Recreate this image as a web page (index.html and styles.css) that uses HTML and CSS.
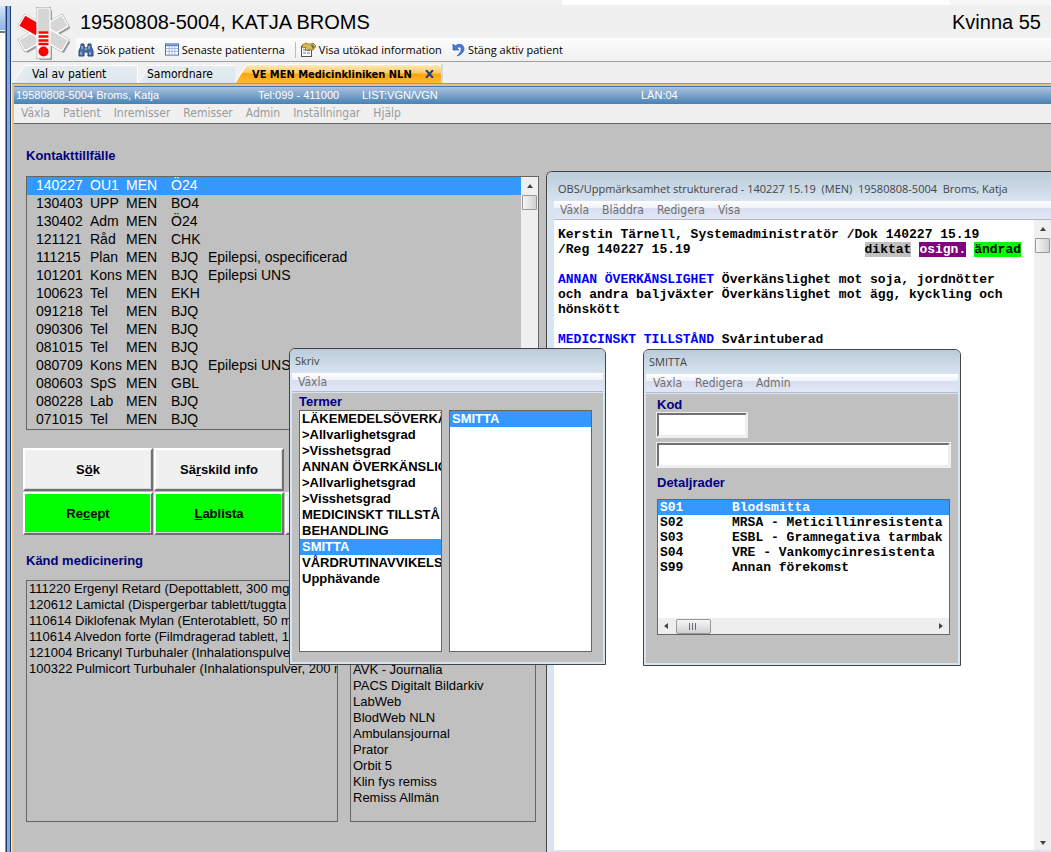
FILE: index.html
```html
<!DOCTYPE html>
<html lang="sv">
<head>
<meta charset="utf-8">
<title>Patientjournal</title>
<link rel="stylesheet" href="styles.css">
</head>
<body>
<div class="app">
  <aside class="edge">
    <div class="edge-pane"><div class="edge-head"></div></div>
    <div class="edge-bar"></div>
  </aside>
  <div class="main">
    <div class="topstrip"><span class="topstrip-light"></span><span class="topstrip-end"></span></div>
    <header class="header">
      <svg class="logo" viewBox="-4 0 64 56" aria-hidden="true">
        <g transform="translate(2 2)" fill="#666" opacity=".6">
          <rect x="21" y="3" width="13" height="50" rx="1"/>
          <rect x="21" y="3" width="13" height="50" rx="1" transform="rotate(60 27.5 28)"/>
          <rect x="21" y="3" width="13" height="50" rx="1" transform="rotate(-60 27.5 28)"/>
        </g>
        <g fill="#999">
          <rect x="20" y="2" width="15" height="52" rx="1" transform="rotate(60 27.5 28)"/>
          <rect x="20" y="2" width="15" height="52" rx="1" transform="rotate(-60 27.5 28)"/>
          <rect x="20" y="2" width="15" height="52" rx="1"/>
        </g>
        <g fill="#d6d6d6" stroke="#fff" stroke-width="1.2">
          <rect x="21" y="3" width="13" height="50" rx="1" transform="rotate(60 27.5 28)"/>
          <rect x="21" y="3" width="13" height="50" rx="1" transform="rotate(-60 27.5 28)"/>
          <rect x="21" y="3" width="13" height="20" rx="1" fill="#f00" transform="rotate(-60 27.5 28)"/>
          <rect x="21" y="3" width="13" height="50" rx="1"/>
        </g>
        <path d="M22 26h11v26H22z" fill="#fff"/>
        <path d="M22.500 27.500h10M22.500 31.500h10M22.500 35.500h10M22.500 39h10" stroke="#f00" stroke-width="2.300"/>
        <circle cx="27.500" cy="46.500" r="5" fill="#f00"/>
      </svg>
      <div class="header-body">
        <div class="patient"><h1>19580808-5004, KATJA BROMS</h1><span>Kvinna 55</span></div>
        <nav class="toolbar">
          <button type="button">
            <svg width="16" height="14" viewBox="0 0 16 14"><path d="M3 1h3v2l1 2h2l1-2V1h3v2l2 5v5h-5V9H6v4H1V8l2-5z" fill="#4a6da7" stroke="#24447c"/><path d="M3 9v3M12 9v3M4 3v3M11 3v3" stroke="#c5d8f2"/><path d="M7 6h2" stroke="#c5d8f2"/></svg>Sök patient</button>
          <button type="button">
            <svg width="14" height="13" viewBox="0 0 15 13"><rect x=".5" y=".5" width="14" height="12" fill="#fff" stroke="#4668ae"/><path d="M1 2h13" stroke="#5e86cf" stroke-width="2"/><path d="M1 5.500h13M1 8.500h13M4.500 3v9M7.500 3v9M10.500 3v9" stroke="#9db3d9"/></svg>Senaste patienterna</button>
          <i class="sep"></i>
          <button type="button">
            <svg width="16" height="15" viewBox="0 0 16 15"><rect x="1.500" y="4.500" width="10" height="10" fill="#fff" stroke="#555"/><path d="M3 8h3M3 11h3M7 11h3M7 8.500h3" stroke="#4a74c0"/><path d="M2 3l4-2 2 1h3l2-1 3 3-3 4-2 0-2-1-2 2-2-1 1-3-3 1z" fill="#e2b752" stroke="#8b671c" stroke-width=".8"/><path d="M12 2l3 3-2 2-2-3z" fill="#557d6a"/></svg>Visa utökad information</button>
          <button type="button">
            <svg width="13" height="14" viewBox="0 0 13 14"><path d="M1 1v6h6L5 5c2-2 5-1 4 2 0 2-2 4-4 6 4-1 7-4 7-7C12 1 7 0 3 3z" fill="#4b7ad8" stroke="#2d57b0" stroke-width=".7"/></svg>Stäng aktiv patient</button>
        </nav>
      </div>
    </header>
    <div class="tabs" role="tablist">
      <button type="button" role="tab" class="tab tab-first"><svg viewBox="0 0 14 18" preserveAspectRatio="none"><path d="M0 18L10 3Q12 0 14 0V18z" fill="#e4ebef"/><path d="M0 18L10 3Q12 .5 14 .5" fill="none" stroke="#fff"/></svg><span>Val av patient</span></button>
      <button type="button" role="tab" class="tab tab-second"><svg viewBox="0 0 14 18" preserveAspectRatio="none"><path d="M0 18L10 3Q12 0 14 0V18z" fill="#e4ebef"/><path d="M0 18L10 3Q12 .5 14 .5" fill="none" stroke="#fff"/></svg><span>Samordnare</span></button>
      <button type="button" role="tab" class="tab tab-active" aria-selected="true"><svg viewBox="0 0 14 18" preserveAspectRatio="none"><defs><linearGradient id="g" x2="0" y2="1"><stop offset="0" stop-color="#ffe9bd"/><stop offset=".45" stop-color="#ffc860"/><stop offset=".5" stop-color="#ffa50a"/><stop offset="1" stop-color="#ffb93c"/></linearGradient></defs><path d="M0 18L10 3Q12 0 14 0V18z" fill="url(#g)"/><path d="M0 18L10 3Q12 .5 14 .5" fill="none" stroke="#fff"/></svg><span>VE MEN Medicinkliniken NLN</span>
        <svg class="x" viewBox="0 0 9 8"><path d="M1 0l7 8M8 0L1 8" stroke="#1f3f7d" stroke-width="2"/></svg></button>
    </div>
    <div class="frame">
      <div class="patientbar"><span class="pb-name">19580808-5004 Broms, Katja</span><span class="pb-tel">Tel:099 - 411000</span><span class="pb-list">LIST:VGN/VGN</span><span>LÄN:04</span></div>
      <nav class="menu menu-main"><button type="button">Växla</button><button type="button">Patient</button><button type="button">Inremisser</button><button type="button">Remisser</button><button type="button">Admin</button><button type="button">Inställningar</button><button type="button">Hjälp</button></nav>
      <main class="desk">
        <section class="left">
          <h2>Kontakttillfälle</h2>
          <div class="box contacts">
            <table>
              <colgroup><col class="c1"><col class="c2"><col class="c3"><col class="c4"><col></colgroup>
              <tbody>
              <tr class="sel"><td>140227</td><td>OU1</td><td>MEN</td><td>Ö24</td><td></td></tr>
              <tr><td>130403</td><td>UPP</td><td>MEN</td><td>BO4</td><td></td></tr>
              <tr><td>130402</td><td>Adm</td><td>MEN</td><td>Ö24</td><td></td></tr>
              <tr><td>121121</td><td>Råd</td><td>MEN</td><td>CHK</td><td></td></tr>
              <tr><td>111215</td><td>Plan</td><td>MEN</td><td>BJQ</td><td>Epilepsi, ospecificerad</td></tr>
              <tr><td>101201</td><td>Kons</td><td>MEN</td><td>BJQ</td><td>Epilepsi UNS</td></tr>
              <tr><td>100623</td><td>Tel</td><td>MEN</td><td>EKH</td><td></td></tr>
              <tr><td>091218</td><td>Tel</td><td>MEN</td><td>BJQ</td><td></td></tr>
              <tr><td>090306</td><td>Tel</td><td>MEN</td><td>BJQ</td><td></td></tr>
              <tr><td>081015</td><td>Tel</td><td>MEN</td><td>BJQ</td><td></td></tr>
              <tr><td>080709</td><td>Kons</td><td>MEN</td><td>BJQ</td><td>Epilepsi UNS</td></tr>
              <tr><td>080603</td><td>SpS</td><td>MEN</td><td>GBL</td><td></td></tr>
              <tr><td>080228</td><td>Lab</td><td>MEN</td><td>BJQ</td><td></td></tr>
              <tr><td>071015</td><td>Tel</td><td>MEN</td><td>BJQ</td><td></td></tr>
              </tbody>
            </table>
            <div class="vscroll"><i class="up"></i><i class="thumb"></i></div>
          </div>
          <div class="buttons">
            <button type="button">S<u>ö</u>k</button>
            <button type="button">Sä<u>r</u>skild info</button>
            <span></span>
            <button type="button" class="green">Re<u>c</u>ept</button>
            <button type="button" class="green"><u>L</u>ablista</button>
            <button type="button" aria-label="Mer"></button>
          </div>
          <h2 class="h-med">Känd medicinering</h2>
          <div class="lists">
            <ul class="box meds">
              <li>111220 Ergenyl Retard (Depottablett, 300 mg</li>
              <li>120612 Lamictal (Dispergerbar tablett/tuggta</li>
              <li>110614 Diklofenak Mylan (Enterotablett, 50 m</li>
              <li>110614 Alvedon forte (Filmdragerad tablett, 1</li>
              <li>121004 Bricanyl Turbuhaler (Inhalationspulve</li>
              <li>100322 Pulmicort Turbuhaler (Inhalationspulver, 200 m</li>
            </ul>
            <ul class="box links">
              <li>AVK - Journalia</li><li>PACS Digitalt Bildarkiv</li><li>LabWeb</li><li>BlodWeb NLN</li><li>Ambulansjournal</li><li>Prator</li><li>Orbit 5</li><li>Klin fys remiss</li><li>Remiss Allmän</li>
            </ul>
          </div>
        </section>

        <section class="window obs">
          <div class="title">OBS/Uppmärksamhet strukturerad - 140227 15.19&nbsp; (MEN)&nbsp; 19580808-5004&nbsp; Broms, Katja</div>
          <nav class="menu menu-win"><button type="button">Växla</button><button type="button">Bläddra</button><button type="button">Redigera</button><button type="button">Visa</button></nav>
          <div class="obs-body">
            <article class="note">
              <p>Kerstin Tärnell, Systemadministratör /Dok 140227 15.19</p>
              <p class="reg"><span>/Reg 140227 15.19</span><span class="tags"><mark class="t-grey">diktat</mark><mark class="t-purple">osign.</mark><mark class="t-green">ändrad</mark></span></p>
              <p class="gap"><b>ANNAN ÖVERKÄNSLIGHET</b> Överkänslighet mot soja, jordnötter<br>och andra baljväxter Överkänslighet mot ägg, kyckling och<br>hönskött</p>
              <p class="gap"><b>MEDICINSKT TILLSTÅND</b> Svårintuberad</p>
            </article>
            <div class="vscroll"><i class="up"></i><i class="thumb"></i><i class="down"></i></div>
          </div>
        </section>

        <section class="window skriv">
          <div class="title">Skriv</div>
          <nav class="menu menu-win"><button type="button">Växla</button></nav>
          <div class="skriv-body">
            <h2>Termer</h2>
            <div class="terms">
              <ul class="box"><li>LÄKEMEDELSÖVERKÄ</li><li>&gt;Allvarlighetsgrad</li><li>&gt;Visshetsgrad</li><li>ANNAN ÖVERKÄNSLIG</li><li>&gt;Allvarlighetsgrad</li><li>&gt;Visshetsgrad</li><li>MEDICINSKT TILLSTÅ</li><li>BEHANDLING</li><li class="sel">SMITTA</li><li>VÅRDRUTINAVVIKELS</li><li>Upphävande</li></ul>
              <ul class="box"><li class="sel">SMITTA</li></ul>
            </div>
          </div>
        </section>

        <section class="window smitta">
          <div class="title">SMITTA</div>
          <nav class="menu menu-win"><button type="button">Växla</button><button type="button">Redigera</button><button type="button">Admin</button></nav>
          <div class="smitta-body">
            <label for="kod">Kod</label>
            <input id="kod" class="kod" type="text">
            <input class="text" type="text" aria-label="Text">
            <h2>Detaljrader</h2>
            <div class="box details">
              <table>
                <colgroup><col class="d1"><col></colgroup>
                <tbody>
                <tr class="sel"><td>S01</td><td>Blodsmitta</td></tr>
                <tr><td>S02</td><td>MRSA - Meticillinresistenta</td></tr>
                <tr><td>S03</td><td>ESBL - Gramnegativa tarmbak</td></tr>
                <tr><td>S04</td><td>VRE - Vankomycinresistenta</td></tr>
                <tr><td>S99</td><td>Annan förekomst</td></tr>
                </tbody>
              </table>
              <div class="hscroll"><i class="lt"></i><i class="hthumb"></i><i class="rt"></i></div>
            </div>
          </div>
        </section>
      </main>
    </div>
  </div>
</div>
</body>
</html>
```
FILE: styles.css
```css
* { box-sizing: border-box; }
body { margin: 0; font: 14px/16px "Liberation Sans", Arial, sans-serif; color: #000; background: #f0f0f0; }
button { font: inherit; color: inherit; border: 0; background: none; padding: 0; white-space: nowrap; }
ul { list-style: none; margin: 0; padding: 0; }
h1, h2, p { margin: 0; }
table { border-collapse: collapse; table-layout: fixed; width: 100%; }
td { padding: 0; white-space: nowrap; overflow: hidden; }

.app { display: flex; height: 100vh; overflow: hidden; }
.edge { display: flex; flex: none; width: 12px; padding-top: 6px; }
.edge-pane { flex: 1; background: #fff; }
.edge-head { height: 27px; background: linear-gradient(#d3e3f8, #8fb4e6 88%, #fff 88%, #fff 94%, #777 94%); }
.edge-bar { width: 7px; border-left: 1px solid #8c8c8c; border-right: 1px solid #f0f0f0;
  background: linear-gradient(90deg, #1c3a70 1px, #87a9e0 1px, #87a9e0 4px, #1c3a70 4px); }
.main { flex: 1; min-width: 0; display: flex; flex-direction: column; }

.topstrip { display: flex; height: 5px; background: #f2f2f2; padding-left: 550px; }
.topstrip-light { flex: 1; background: #fff; }
.topstrip-end { width: 101px; background: #f6f6f6; }

.header { display: flex; height: 57px; border-bottom: 1px solid #a0a0a0; }
.logo { flex: none; width: 64px; height: 56px; }
.header-body { flex: 1; display: flex; flex-direction: column; }
.patient { flex: 1; display: flex; justify-content: space-between; align-items: center; padding: 0 10px 0 4px; font-size: 20px; line-height: 24px; }
.patient h1 { font-size: 20px; font-weight: 400; }
.toolbar { display: flex; align-items: center; height: 23px; gap: 10px; padding-left: 2px; font: 11px/16px "Open Sans", sans-serif; background: linear-gradient(#fdfdfd, #f0f0f0); }
.toolbar button { display: flex; align-items: center; gap: 3px; }
.sep { width: 1px; height: 16px; background: #bbb; }
.sep + button { margin-left: -6px; }

.tabs { display: flex; align-items: flex-end; height: 22px; border-bottom: 1px solid #7c9cc0; font: 12px/16px "DejaVu Sans Condensed", Tahoma, sans-serif; }
.tab { display: flex; align-items: center; height: 18px; }
.tab > svg:first-child { width: 14px; height: 18px; flex: none; }
.tab span { flex: 1; text-align: left; height: 18px; line-height: 17px; padding-left: 5px; background: linear-gradient(#e4ebef, #dde8ec); border-top: 1px solid #fff; }
.tab-first { width: 126px; padding-left: 1px; border-right: 1px solid #fff; }
.tab-second { width: 97px; }
.tab-second span { padding-left: 0; margin-left: -5px; }
.tab-active { width: 208px; height: 19px; font-weight: 700; position: relative; border-right: 2px solid #c9dcee; }
.tab-active > svg:first-child { height: 19px; }
.tab-active span { height: 19px; line-height: 19px; font-size: 11px; padding-left: 3px; background: linear-gradient(#ffe9bd, #ffc860 45%, #ffa50a 50%, #ffb93c); }
.x { position: absolute; right: 7px; top: 6px; width: 9px; height: 8px; }

.frame { flex: 1; min-height: 0; display: flex; flex-direction: column; border: solid #e8c27c; border-width: 2px 0 0 2px; }
.patientbar { display: flex; flex: none; height: 18px; padding-left: 2px; border-top: 1px solid #3f79ad; color: #fff; font-size: 11px; line-height: 17px; background: linear-gradient(#adc1de, #4682b4); white-space: nowrap; }
.pb-name { width: 242px; }
.pb-tel { width: 104px; }
.pb-list { width: 279px; }
.menu { display: flex; flex: none; align-items: center; gap: 13px; font: 12px/16px "DejaVu Sans Condensed", Tahoma, sans-serif; }
.menu-main { height: 20px; padding: 0 0 1px 7px; color: #9a9a9a; border-bottom: 1px solid #666; }
.desk { flex: 1; min-height: 0; position: relative; background: #c0c0c0; overflow: hidden; }

h2, label { font-size: 13px; line-height: 16px; font-weight: 700; color: #000080; }
.box { border: 1px solid #666; overflow: hidden; }
.box li { height: 16px; line-height: 16px; padding-left: 2px; white-space: nowrap; }
.sel { background: #3399ff; color: #fff; }
.left { display: flex; flex-direction: column; width: 525px; padding: 24px 0 0 12px; }
.contacts { display: flex; margin-top: 12px; }
.contacts table { flex: 1; }
.contacts td { height: 18px; line-height: 16px; vertical-align: top; }
.contacts td:first-child { padding-left: 9px; }
.c1 { width: 63px; } .c2 { width: 36px; } .c3 { width: 45px; } .c4 { width: 37px; }
.vscroll { display: flex; flex-direction: column; align-items: center; width: 17px; flex: none; background: #efefef; }
.up, .down { border: 3px solid transparent; width: 0; height: 0; }
.up { border-bottom: 4px solid #444; border-top: 0; margin: 7px 0; }
.down { border-top: 4px solid #444; border-bottom: 0; margin: auto 0 5px; }
.thumb { width: 15px; height: 15px; border: 1px solid #999; border-radius: 1px; background: linear-gradient(90deg, #f6f6f6, #d0d0d4); }

.buttons { display: grid; grid-template-columns: repeat(3, 130px); grid-auto-rows: 43px; gap: 1px; margin: 18px 0 0 -3px; }
.buttons button { font-weight: 700; font-size: 13px; background: #f0f0f0; border: 2px solid; border-color: #fff #707070 #707070 #fff; box-shadow: inset -1px -1px #d8d8d8; }
.buttons .green { background: #00ff00; }
.h-med { margin-top: 18px; }
.lists { display: flex; gap: 12px; margin-top: 11px; height: 242px; font-size: 13px; }
.meds { width: 312px; }
.links { width: 186px; display: flex; flex-direction: column; justify-content: flex-end; padding-bottom: 15px; }

.window { position: absolute; display: flex; flex-direction: column; border: 1px solid #444; border-radius: 6px 6px 0 0; background: #d7e4f2; overflow: hidden; }
.title { flex: none; height: 24px; padding-left: 5px; font: 11px/24px "Open Sans", sans-serif; color: #444; white-space: nowrap; background: linear-gradient(#bccbda, #d7e4f0); }
.menu-win { height: 19px; margin: 0 2px; padding-left: 6px; color: #707070; border-bottom: 1px solid #b4b9d0; background: linear-gradient(#fff, #f0f2fa 38%, #d8def0 38%, #e2e7f5); }
.obs { left: 532px; right: 0; top: 47px; bottom: 0; border-bottom: 0; border-right: 0; border-top-right-radius: 0; }
.obs .title { height: 29px; padding: 4px 0 0 11px; line-height: 26px; }
.obs .menu-win { margin: 0 0 0 7px; }
.obs-body { flex: 1; display: flex; margin: 0 0 2px 7px; background: #fff; }
.note { flex: 1; padding: 7px 13px 0 4px; font: 700 13px/15px "Liberation Mono", monospace; white-space: nowrap; }
.reg { display: flex; justify-content: space-between; }
.tags { display: flex; gap: 8px; }
.gap { margin-top: 15px; }
.note b { color: #0000ff; }
mark { color: #000; }
.t-grey { background: #c0c0c0; }
.t-purple { background: #800080; color: #fff; }
.t-green { background: #00ff00; }

.skriv { left: 275px; top: 224px; width: 317px; height: 317px; }
.smitta .menu-win { padding-left: 7px; }
.skriv-body { flex: 1; display: flex; flex-direction: column; margin: 1px 2px 2px; padding: 1px 11px 10px 7px; background: #c0c0c0; }
.terms { flex: 1; display: grid; grid-template-columns: 1fr 1fr; gap: 7px; }
.terms .box { background: #fff; font-weight: 700; font-size: 13px; }
.smitta { left: 629px; top: 225px; width: 318px; height: 317px; }
.smitta-body { flex: 1; display: flex; flex-direction: column; margin: 1px 2px 2px; padding: 3px 8px 28px 11px; background: #c0c0c0; }
input { height: 24px; margin: 0; border: 2px solid; border-color: #707070 #eee #eee #707070; outline: 1px solid #f0f0f0; background: #fff; }
.kod { width: 90px; }
.text { margin-top: 6px; width: 100%; }
.smitta-body h2 { margin: 8px 0; }
.details { flex: 1; display: flex; flex-direction: column; justify-content: space-between; background: #fff; font: 700 13px/15px "Liberation Mono", monospace; }
.details td { height: 15px; padding-left: 2px; }
.d1 { width: 72px; }
.hscroll { display: flex; align-items: center; height: 16px; padding: 0 6px; background: #eee; }
.lt, .rt { border: 3px solid transparent; }
.lt { border-right: 4px solid #444; border-left: 0; }
.rt { border-left: 4px solid #444; border-right: 0; margin-left: auto; }
.hthumb { width: 35px; height: 15px; margin-left: 8px; border: 1px solid #999; border-radius: 2px;
  background: linear-gradient(90deg, transparent 12px, #666 12px, #666 13px, transparent 13px, transparent 15px, #666 15px, #666 16px, transparent 16px, transparent 18px, #666 18px, #666 19px, transparent 19px) center / 100% 7px no-repeat, linear-gradient(#f6f6f6, #d0d0d4); }
```
